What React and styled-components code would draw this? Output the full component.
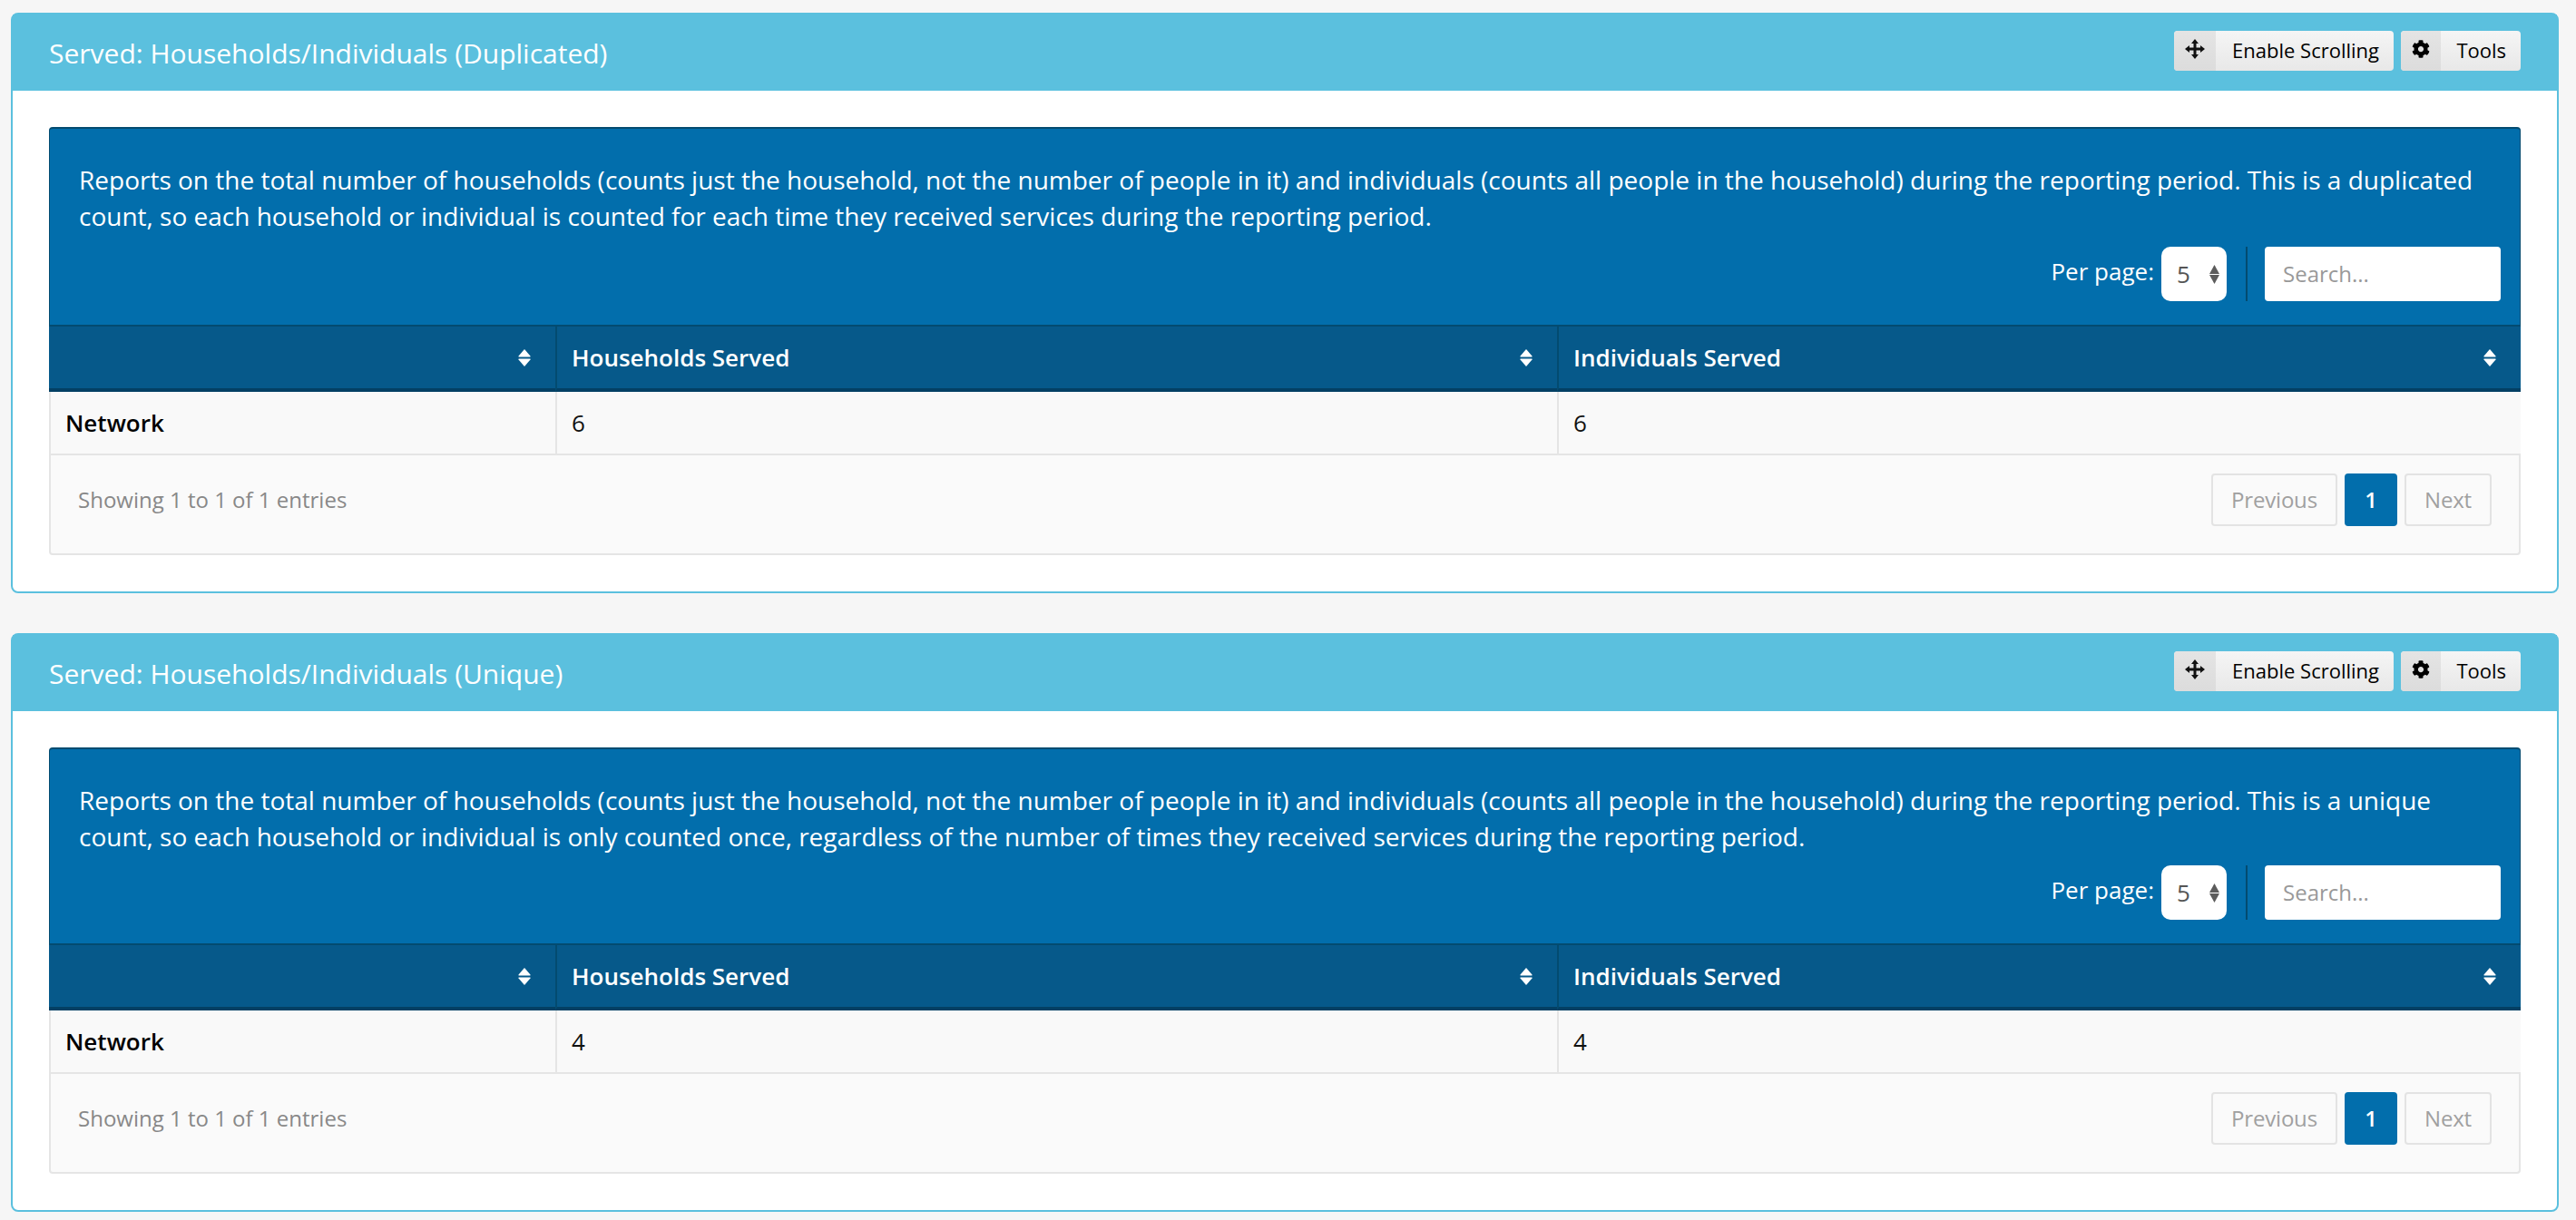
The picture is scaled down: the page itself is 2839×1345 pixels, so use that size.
import React from "react";
import styled, { createGlobalStyle } from "styled-components";
import { FaCog } from "react-icons/fa";

const GlobalStyle = createGlobalStyle`
  * { box-sizing: border-box; }
  body {
    margin: 0;
    background: #f6f6f6;
    font-family: "Open Sans", "Noto Sans", sans-serif;
  }
`;

const reports = [
  {
    title: "Served: Households/Individuals (Duplicated)",
    description:
      "Reports on the total number of households (counts just the household, not the number of people in it) and individuals (counts all people in the household) during the reporting period. This is a duplicated count, so each household or individual is counted for each time they received services during the reporting period.",
    households: 6,
    individuals: 6,
    descriptionHeight: 94,
  },
  {
    title: "Served: Households/Individuals (Unique)",
    description:
      "Reports on the total number of households (counts just the household, not the number of people in it) and individuals (counts all people in the household) during the reporting period. This is a unique count, so each household or individual is only counted once, regardless of the number of times they received services during the reporting period.",
    households: 4,
    individuals: 4,
    descriptionHeight: 92,
  },
];

const MoveIcon = () => (
  <svg width="22" height="22" viewBox="0 0 22 22" fill="#111">
    <path d="M11 0 L15 5 L12.5 5 L12.5 9.5 L17 9.5 L17 7 L22 11 L17 15 L17 12.5 L12.5 12.5 L12.5 17 L15 17 L11 22 L7 17 L9.5 17 L9.5 12.5 L5 12.5 L5 15 L0 11 L5 7 L5 9.5 L9.5 9.5 L9.5 5 L7 5 Z" />
  </svg>
);

const SortIcon = () => (
  <svg width="14" height="19" viewBox="0 0 14 19" fill="#fff">
    <path d="M7 0 L13.5 7.5 Q14 8.5 13 8.5 L1 8.5 Q0 8.5 .5 7.5 Z" />
    <path d="M7 19 L13.5 11.5 Q14 10.5 13 10.5 L1 10.5 Q0 10.5 .5 11.5 Z" />
  </svg>
);

const ReportPanel = ({ report }) => (
  <Panel>
    <PanelHeader>
      <PanelTitle>{report.title}</PanelTitle>
      <HeaderActions>
        <ActionButton $width={242}>
          <ActionIcon $width={46}>
            <MoveIcon />
          </ActionIcon>
          <ActionLabel>Enable Scrolling</ActionLabel>
        </ActionButton>
        <ActionButton $width={132}>
          <ActionIcon $width={44}>
            <FaCog size={20} />
          </ActionIcon>
          <ActionLabel>Tools</ActionLabel>
        </ActionButton>
      </HeaderActions>
    </PanelHeader>
    <PanelBody>
      <Intro>
        <Description $height={report.descriptionHeight}>{report.description}</Description>
        <Controls>
          <PerPageLabel>Per page:</PerPageLabel>
          <PerPageSelect>
            <span>5</span>
            <svg width="11" height="21" viewBox="0 0 11 21" fill="#5c5c5c">
              <path d="M5.5 0 L11 10 L0 10 Z" />
              <path d="M5.5 21 L11 11 L0 11 Z" />
            </svg>
          </PerPageSelect>
          <ControlDivider />
          <SearchInput placeholder="Search..." />
        </Controls>
      </Intro>
      <ReportTable>
        <colgroup>
          <col style={{ width: 558 }} />
          <col style={{ width: 1104 }} />
          <col />
        </colgroup>
        <thead>
          <tr>
            {["", "Households Served", "Individuals Served"].map((label, i) => (
              <HeadCell key={i}>
                <HeadInner>
                  <span>{label}</span>
                  <SortIcon />
                </HeadInner>
              </HeadCell>
            ))}
          </tr>
        </thead>
        <tbody>
          <tr>
            <RowName>Network</RowName>
            <ValueCell>{report.households}</ValueCell>
            <ValueCell>{report.individuals}</ValueCell>
          </tr>
        </tbody>
      </ReportTable>
      <TableFooter>
        <EntriesInfo>Showing 1 to 1 of 1 entries</EntriesInfo>
        <Pagination>
          <PageButton $width={139}>Previous</PageButton>
          <PageButton $width={58} $active>
            1
          </PageButton>
          <PageButton $width={96}>Next</PageButton>
        </Pagination>
      </TableFooter>
    </PanelBody>
  </Panel>
);

const App = () => (
  <>
    <GlobalStyle />
    <Page>
      {reports.map((report) => (
        <ReportPanel key={report.title} report={report} />
      ))}
    </Page>
  </>
);

export default App;

const Page = styled.div`
  display: flex;
  flex-direction: column;
  gap: 44px;
  padding: 14px 19px 8px 12px;
`;

const Panel = styled.section`
  background: #fff;
  border: 2px solid #5bc0de;
  border-radius: 8px;
`;

const PanelHeader = styled.header`
  display: flex;
  justify-content: space-between;
  align-items: flex-start;
  height: 84px;
  padding: 18px 40px 0;
  background: #5bc0de;
`;

const PanelTitle = styled.h2`
  margin: 0;
  padding-top: 3px;
  color: #fff;
  font-size: 30px;
  line-height: 44px;
  font-weight: 400;
`;

const HeaderActions = styled.div`
  display: flex;
  gap: 8px;
`;

const ActionButton = styled.div`
  display: flex;
  width: ${(p) => p.$width}px;
  height: 44px;
  border-radius: 4px;
  overflow: hidden;
  background: linear-gradient(#f5f5f5, #e8e8e8);
  color: #000;
`;

const ActionIcon = styled.span`
  display: flex;
  flex: none;
  align-items: center;
  justify-content: center;
  width: ${(p) => p.$width}px;
  padding-bottom: 4px;
  background: linear-gradient(#e4e4e4, #dcdcdc);
`;

const ActionLabel = styled.span`
  flex: 1;
  padding-right: 16px;
  font-size: 22px;
  line-height: 43px;
  text-align: right;
  white-space: nowrap;
`;

const PanelBody = styled.div`
  padding: 40px;
`;

const Intro = styled.div`
  padding: 36px 21px 26px 32px;
  background: #026eac;
  border: 2px solid #034b70;
  border-width: 2px 1px 0;
  border-radius: 4px 4px 0 0;
`;

const Description = styled.p`
  margin: 0;
  height: ${(p) => p.$height}px;
  color: #fff;
  font-size: 28px;
  line-height: 40px;
`;

const Controls = styled.div`
  display: flex;
  justify-content: flex-end;
  align-items: center;
`;

const PerPageLabel = styled.label`
  margin-right: 8px;
  padding-bottom: 6px;
  color: #fff;
  font-size: 26px;
`;

const PerPageSelect = styled.div`
  display: flex;
  align-items: center;
  justify-content: space-between;
  width: 72px;
  height: 60px;
  padding: 0 8px 0 17px;
  background: #fff;
  border-radius: 10px;
  color: #555;
  font-size: 26px;
`;

const ControlDivider = styled.div`
  width: 2px;
  height: 60px;
  margin: 0 19px 0 21px;
  background: #034b70;
`;

const SearchInput = styled.input`
  width: 260px;
  height: 60px;
  padding: 0 20px 2px;
  border: 0;
  border-radius: 4px;
  font-family: inherit;
  font-size: 24px;
  color: #555;
  background: #fff;

  &::placeholder {
    color: #999;
    opacity: 1;
  }
`;

const ReportTable = styled.table`
  width: 100%;
  table-layout: fixed;
  border-collapse: separate;
  border-spacing: 0;
`;

const HeadCell = styled.th`
  height: 74px;
  padding: 0;
  background: #06598a;
  border-top: 2px solid #034b70;
  border-bottom: 4px solid #034064;
  border-left: 2px solid #034b70;

  &:first-child {
    border-left: 0;
  }
`;

const HeadInner = styled.div`
  display: flex;
  align-items: center;
  justify-content: space-between;
  padding: 0 27px 0 16px;
  color: #fff;
  font-size: 26px;
  font-weight: 600;
  text-align: left;
`;

const ValueCell = styled.td`
  height: 70px;
  padding: 0 16px;
  background: #f9f9f9;
  border-bottom: 2px solid #e5e5e5;
  border-left: 2px solid #e5e5e5;
  color: #111;
  font-size: 26px;
`;

const RowName = styled(ValueCell)`
  font-weight: 600;
  color: #000;
`;

const TableFooter = styled.div`
  display: flex;
  justify-content: space-between;
  align-items: flex-start;
  height: 110px;
  padding: 20px 30px 0 30px;
  background: #fafafa;
  border: 2px solid #e5e5e5;
  border-top: 0;
  border-radius: 0 0 4px 4px;
`;

const EntriesInfo = styled.div`
  color: #888;
  font-size: 24px;
  line-height: 58px;
`;

const Pagination = styled.nav`
  display: flex;
  gap: 8px;
`;

const PageButton = styled.span`
  width: ${(p) => p.$width}px;
  height: 58px;
  border: 2px solid ${(p) => (p.$active ? "#026eac" : "#e3e3e3")};
  border-radius: 4px;
  background: ${(p) => (p.$active ? "#026eac" : "transparent")};
  color: ${(p) => (p.$active ? "#fff" : "#a0a0a0")};
  font-size: 24px;
  font-weight: ${(p) => (p.$active ? 600 : 400)};
  line-height: 54px;
  letter-spacing: -0.2px;
  text-align: center;
`;
